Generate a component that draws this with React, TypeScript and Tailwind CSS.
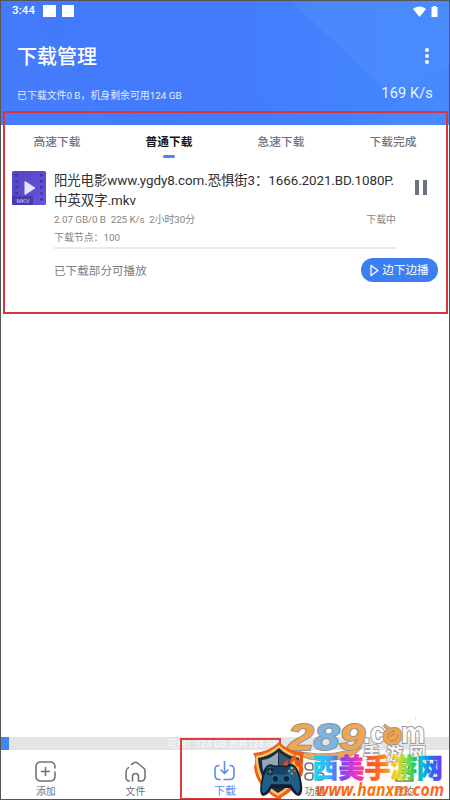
import React from "react";

const tabs = ["高速下载", "普通下载", "急速下载", "下载完成"];

function StatusBar() {
  return (
    <div className="flex h-[20px] items-center justify-between pl-[11px] pr-[11px]">
      <div className="flex items-center">
        <span className="w-[31px] text-[11.5px] font-medium leading-none tracking-[0.1px]">3:44</span>
        <span className="h-[12px] w-[13px] bg-white" />
        <span className="ml-[6px] h-[12px] w-[12px] bg-white" />
      </div>
      <div className="flex items-center gap-[5px]">
        <svg width="13" height="11" viewBox="0 0 13 11" fill="white">
          <path d="M0 3C3.7-.5 9.300-.5 13 3L6.500 11Z" />
        </svg>
        <svg width="7" height="11" viewBox="0 0 7 11" fill="white">
          <path d="M2 0h3v1h1.500v10h-6V1H2Z" />
        </svg>
      </div>
    </div>
  );
}

function Header() {
  return (
    <header className="relative h-[124px] shrink-0 overflow-hidden bg-gradient-to-r from-[#4478fb] via-[#437cfd] to-[#4387fd] text-white">
      <svg className="absolute inset-0" width="448" height="124" viewBox="0 0 448 124">
        <path d="M0 0H20L110 124H0Z" fill="#4d86fa" opacity=".25" />
        <path d="M290 0H448V62L394 98Z" fill="#5794fd" opacity=".35" />
        <path d="M224 62L285 124H224Z" fill="#3e70fa" opacity=".06" />
        <path d="M448 58V124H370Z" fill="#5594fd" opacity=".2" />
      </svg>
      <div className="relative">
        <StatusBar />
        <div className="flex h-[70px] items-center justify-between pl-[16px] pr-[20px]">
          <h1 className="pt-px text-[20px] font-medium leading-none">下载管理</h1>
          <div className="flex flex-col gap-[2px]">
            <span className="h-[4px] w-[4px] rounded-full bg-white" />
            <span className="h-[4px] w-[4px] rounded-full bg-white" />
            <span className="h-[4px] w-[4px] rounded-full bg-white" />
          </div>
        </div>
        <div className="-mt-[8px] flex h-[20px] items-center justify-between pl-[16px] pr-[16px]">
          <span className="pt-[5px] text-[9.9px] leading-none text-[#e2ecff]">已下载文件0 B，机身剩余可用124 GB</span>
          <span className="text-[14.6px] leading-none tracking-[0.1px] text-[#eaf2ff]">169 K/s</span>
        </div>
      </div>
    </header>
  );
}

function Thumb() {
  return (
    <svg className="shrink-0" width="34" height="34" viewBox="0 0 34 34">
      <defs>
        <linearGradient id="thumb" x1="0" y1="0" x2="1" y2="1">
          <stop offset="0" stopColor="#5547bf" />
          <stop offset="1" stopColor="#6254df" />
        </linearGradient>
      </defs>
      <rect width="34" height="34" rx="1.500" fill="url(#thumb)" />
      <g fill="#4336a8">
        {[3, 9, 15, 21, 27].map((y) => (
          <g key={y}>
            <rect x="3" y={y} width="3" height="2.500" rx=".5" />
            <rect x="28" y={y} width="3" height="2.500" rx=".5" />
          </g>
        ))}
      </g>
      <rect y="25" width="21" height="9" rx="1" fill="#4a3ba9" />
      <path d="M13 10.500L23 17L13 23.500Z" fill="#e6e3fb" stroke="#e6e3fb" strokeLinejoin="round" />
      <text x="4.500" y="32" fontSize="6" fill="#d5cff5" textLength="13">MKV</text>
    </svg>
  );
}

function DownloadRow() {
  return (
    <section className="flex h-[148px] pl-[11px]">
      <div className="pt-[6px]"><Thumb /></div>
      <div className="ml-[8px] w-[342px] shrink-0">
        <div className="h-[45px] whitespace-nowrap pt-[6px] text-[13.4px] leading-[20px] text-[#303030]">
          <div className="tracking-[-0.08px]">阳光电影www.ygdy8.com.恐惧街3：1666.2021.BD.1080P.</div>
          <div>中英双字.mkv</div>
        </div>
        <div className="flex h-[19px] items-center justify-between text-[9.9px] leading-none text-[#858585]">
          <span className="whitespace-pre tracking-[-0.08px]">2.07 GB/0 B  225 K/s  2小时30分</span>
          <span>下载中</span>
        </div>
        <div className="flex h-[20px] items-center border-b-2 border-[#ebebeb] text-[9.9px] leading-none text-[#858585]">下载节点：100</div>
        <div className="flex h-[42px] w-[384px] items-center justify-between">
          <span className="pt-[3px] text-[11.6px] leading-none text-[#7d7d7d]">已下载部分可播放</span>
          <button className="flex h-[24px] w-[77px] items-center justify-center gap-[3px] rounded-full bg-[#3c7ff3] pt-px text-[11.6px] leading-none text-white">
            <svg width="9" height="13" viewBox="0 0 9 13" fill="none" stroke="white" strokeWidth="1.300" strokeLinejoin="round">
              <path d="M1 1.500L8 6.500L1 11.500Z" />
            </svg>
            边下边播
          </button>
        </div>
      </div>
      <div className="ml-[19px] mt-[15px] flex h-[15px] w-[12px] justify-between self-start">
        <span className="h-full w-[4px] bg-[#6b7280]" />
        <span className="h-full w-[4px] bg-[#6b7280]" />
      </div>
    </section>
  );
}

const icons = {
  add: (
    <path d="M20 7V6Q20 1 15 1H6Q1 1 1 6V15Q1 20 6 20H15Q20 20 20 15V11M10.500 6.500V14.500M6.500 10.500H14.500" />
  ),
  file: (
    <path d="M3.500 6.500Q1 8.500 1 11V16Q1 20 4.500 20M7.500 20V15.500Q7.500 12.500 10.500 12.500T13.500 15.500V20H16Q20 20 20 16V9.500Q20 8 18.500 7L12.500 2Q10.500 .5 8.500 2L6.500 3.500" />
  ),
  down: (
    <path d="M5 4.500Q1 4.500 1 8.500V14Q1 18.500 5 18.500H6M10 18.500H16Q20 18.500 20 14V8.500Q20 4.500 16 4.500M10.500 0V12M7 9L10.500 12.500L14 9" />
  ),
  feature: (
    <path d="M5 2H6Q9 2 9 5V8Q9 9 8 9H5Q1 9 1 5.500T5 2M16 2H15Q12 2 12 5V8Q12 9 13 9H16Q20 9 20 5.500T16 2M5 19H6Q9 19 9 16V13Q9 12 8 12H5Q1 12 1 15.500T5 19M16 19H15Q12 19 12 16V13Q12 12 13 12H16Q20 12 20 15.500T16 19" />
  ),
  mine: (
    <path d="M10.500 1A4.500 4.500 0 1 1 10.400 1M2 20Q2 12 10.500 12T19 20Z" />
  ),
};

const navItems: { label: string; icon: keyof typeof icons; active?: boolean }[] = [
  { label: "添加", icon: "add" },
  { label: "文件", icon: "file" },
  { label: "下载", icon: "down", active: true },
  { label: "功能", icon: "feature" },
  { label: "我的", icon: "mine" },
];

function BottomNav() {
  return (
    <nav className="grid h-[49px] shrink-0 grid-cols-5">
      {navItems.map((n) => (
        <div key={n.label} className={"flex flex-col items-center pt-[11px] " + (n.active ? "text-[#5b8de8]" : "text-[#737373]")}>
          <svg width="21" height="21" viewBox="0 0 21 21" fill="none" stroke="currentColor" strokeWidth="1.600" strokeLinecap="round" strokeLinejoin="round">
            {icons[n.icon]}
          </svg>
          <span className={"leading-none " + (n.active ? "mt-[4px] text-[11px]" : "mt-[5px] text-[9.9px]")}>{n.label}</span>
        </div>
      ))}
    </nav>
  );
}

function ShieldLogo() {
  return (
    <g>
      <path d="M279 742Q269 752 253 753Q257 759 254 767Q256 787 278 799Q299 790 303 768Q302 760 304 752Q289 752 279 742Z" fill="#e8641a" />
      <path d="M279 745Q269 754 256 756Q255 784 278 796Q300 784 301 756Q288 754 279 745Z" fill="#ffc262" />
      <path d="M279 748Q270 756 258 758Q259 782 278 793Q298 782 299 758Q287 756 279 748Z" fill="#172d42" />
      <path d="M278 752Q271 759 262 760Q262 770 265 775L278 772Z" fill="#95a6b4" />
      <path d="M279 752Q287 759 294 760V768L279 773Z" fill="#40566a" />
      <path d="M283 770Q282 763 288 760Q286 765 290 766Q289 758 296 753Q294 759 299 760Q301 756 299 753Q306 759 301 766Q305 765 302 776L294 780Z" fill="#ef541b" />
      <path d="M287 770Q286 766 291 768Q290 763 295 760Q294 766 299 767Q300 774 295 777Z" fill="#ffb73e" />
      <g transform="translate(27 76) scale(.91 .9)">
        <path d="M263 767Q267 763 271 766H286Q290 762 295 767Q300 773 302 786Q304 799 298 800Q293 798 289 791H269Q265 799 259 800Q254 797 258 780Q259 771 263 767Z" fill="#111f31" />
        <path d="M264 768Q268 766 271 768H287Q291 765 294 768Q299 777 300 788Q300 797 297 797Q293 792 290 787H268Q263 797 259 797Q256 789 264 768Z" fill="#1d5f87" />
        <path d="M268 768H289L285 776H273Z" fill="#174362" />
        <circle cx="267" cy="773" r="4" fill="#102438" />
        <path d="M267 770V776M264 773H270" stroke="#4b89ad" strokeWidth="1.200" />
        <circle cx="273" cy="781" r="3.800" fill="#102438" stroke="#377da3" />
        <circle cx="285" cy="781" r="3.800" fill="#102438" stroke="#377da3" />
        <circle cx="291" cy="769" r="1.300" fill="#ffc638" />
        <circle cx="288" cy="772" r="1.300" fill="#32bee5" />
        <circle cx="294" cy="772" r="1.300" fill="#ee4c42" />
        <circle cx="291" cy="775" r="1.300" fill="#ff7b31" />
      </g>
    </g>
  );
}

function SiteMarks() {
  return (
    <svg className="pointer-events-none absolute inset-0" width="450" height="800" viewBox="0 0 450 800">
      <defs>
        <linearGradient id="rainbow" gradientUnits="userSpaceOnUse" x1="311" y1="0" x2="442" y2="0">
          <stop offset="0" stopColor="#15d9ed" />
          <stop offset=".13" stopColor="#2cb7ff" />
          <stop offset=".23" stopColor="#7b45f2" />
          <stop offset=".35" stopColor="#ed34c7" />
          <stop offset=".44" stopColor="#ff4b32" />
          <stop offset=".56" stopColor="#ff831d" />
          <stop offset=".65" stopColor="#f5d52a" />
          <stop offset=".73" stopColor="#83e339" />
          <stop offset=".8" stopColor="#0ac76b" />
          <stop offset=".85" stopColor="#0cb9e5" />
          <stop offset=".93" stopColor="#2468f2" />
          <stop offset="1" stopColor="#7c39f0" />
        </linearGradient>
        <linearGradient id="address" gradientUnits="userSpaceOnUse" x1="316" y1="0" x2="444" y2="0">
          <stop stopColor="#ff5a15" />
          <stop offset=".5" stopColor="#f57b0b" />
          <stop offset="1" stopColor="#ff642b" />
        </linearGradient>
      </defs>
      <path d="M287 748Q306 764 336 760Q356 757 362 747L350 750Q318 759 287 748Z" fill="#f3a650" stroke="#999" />
      <text x="288" y="750" fontFamily="Liberation Sans" fontSize="36" fontWeight="700" fontStyle="italic" textLength="77" lengthAdjust="spacingAndGlyphs" stroke="#929292" strokeWidth="2" paintOrder="stroke">
        <tspan fill="#f3a650">2</tspan><tspan fill="#79b7df">8</tspan><tspan fill="#f3a650">9</tspan>
      </text>
      <g fontFamily="Liberation Sans" fontSize="29" fontWeight="700" fill="#fafafa" stroke="#999" strokeWidth="2" paintOrder="stroke">
        <text x="363" y="743" textLength="22" lengthAdjust="spacingAndGlyphs">.c</text>
        <text x="401" y="743" textLength="24" lengthAdjust="spacingAndGlyphs">m</text>
      </g>
      <path d="M385 728Q382 726 385 724L390 728Q402 725 402 736Q401 745 392 745T383 736Q383 731 388 729Z" fill="#f2a24b" stroke="#999" />
      <path d="M388 739Q387 731 395 731M390 741Q398 741 398 735M391 737Q391 734 395 734" fill="none" stroke="#a98256" />
      <text x="363" y="760" fontFamily="Noto Sans CJK SC" fontSize="17" fontWeight="700" textLength="63" fill="#f6f6f6" stroke="#999" strokeWidth="1.500" paintOrder="stroke">手游网</text>
      <ShieldLogo />
      <text x="312" y="778" fontFamily="Noto Sans CJK SC" fontSize="27" fontWeight="900" textLength="131" lengthAdjust="spacingAndGlyphs" fill="url(#rainbow)" stroke="url(#rainbow)" strokeWidth=".4">西美手游网</text>
      <text x="316" y="796" fontFamily="Noto Sans" fontSize="18" fontWeight="700" fontStyle="italic" textLength="128" lengthAdjust="spacingAndGlyphs" fill="url(#address)">www.hanxm.com</text>
      <circle cx="415.500" cy="718.500" r=".5" fill="#aaa" />
    </svg>
  );
}

export default function App() {
  return (
    <div className="relative flex h-[800px] w-[450px] flex-col overflow-hidden border border-[#555] bg-white font-['Roboto','Noto_Sans_CJK_SC',sans-serif]">
      <Header />
      <div className="grid h-[40px] shrink-0 grid-cols-4">
        {tabs.map((tab, i) => (
          <div key={tab} className={"flex flex-col items-center pt-[12px] text-[11.7px] leading-none " + (i === 1 ? "font-bold text-[#171717]" : "font-medium text-[#737580]")}>
            {tab}
            {i === 1 && <span className="mt-[6px] h-[3px] w-[12px] rounded-full bg-[#4c86ed]" />}
          </div>
        ))}
      </div>
      <DownloadRow />
      <main className="flex-1" />
      <div className="relative flex h-[13px] shrink-0 items-center bg-[#e3e4e6]">
        <span className="h-full w-[8px] bg-[#4385ed]" />
        <span className="ml-[158px] whitespace-pre text-[9.5px] leading-none text-[#fafafa]">可用：124 GB 总共128 GB</span>
      </div>
      <BottomNav />
      <div className="pointer-events-none absolute left-[2px] top-[110px] h-[203px] w-[445px] border-2 border-[#d8363d]" />
      <div className="pointer-events-none absolute left-[179px] top-[737px] h-[62px] w-[101px] border-2 border-[#dc3e43]" />
      <div className="absolute -left-px -top-px"><SiteMarks /></div>
    </div>
  );
}
